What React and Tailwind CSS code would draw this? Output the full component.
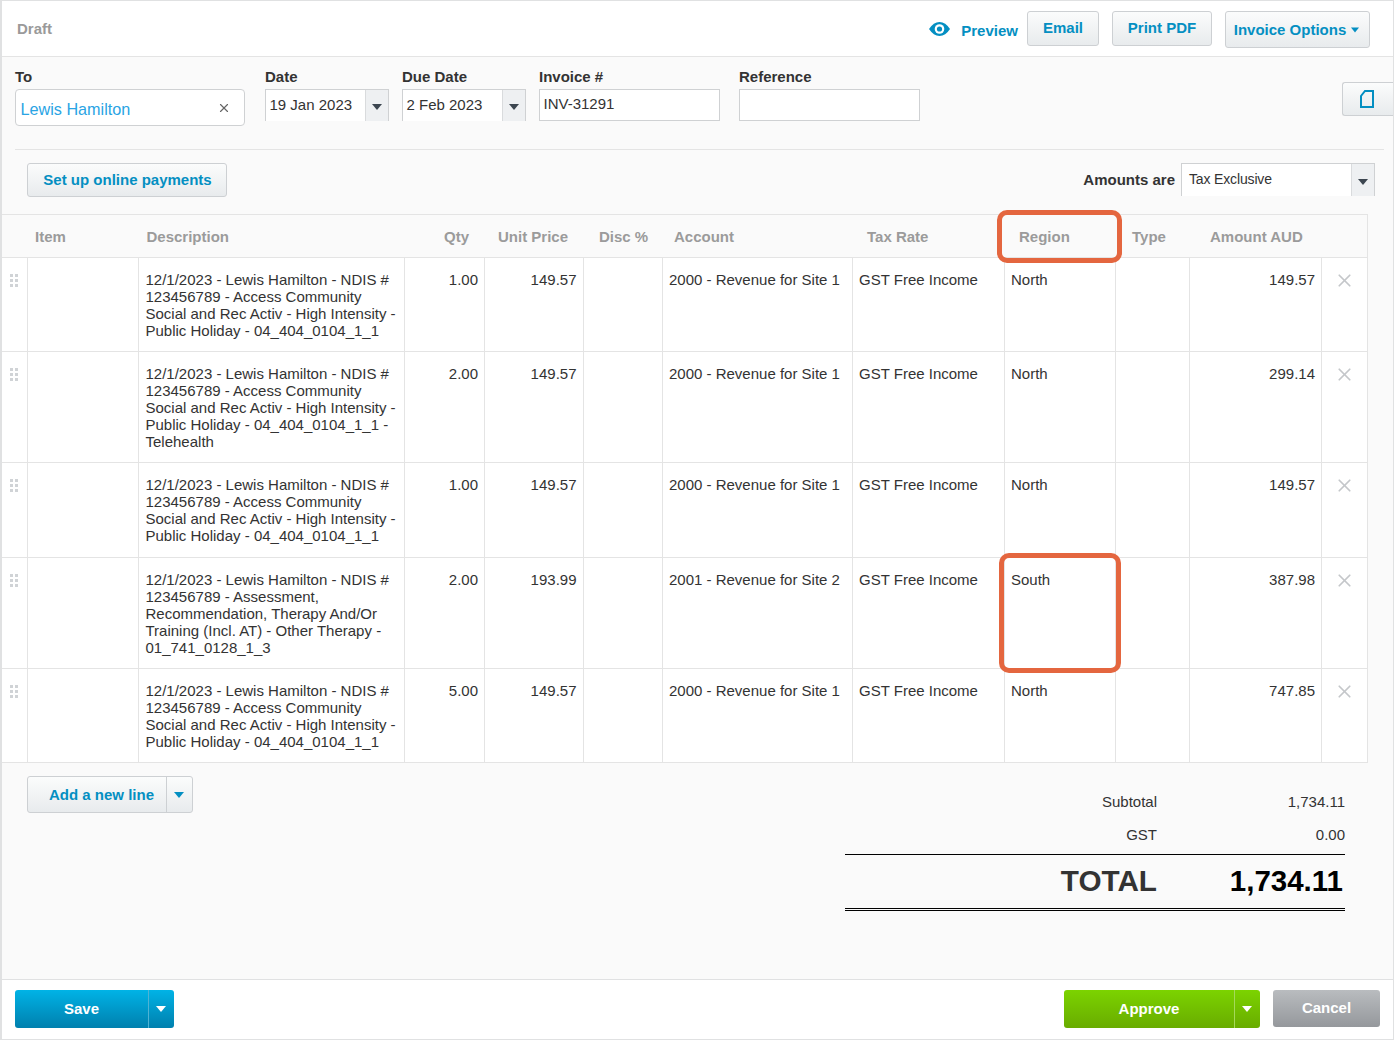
import { X } from "lucide-react";

const FONT = "font-['Liberation_Sans',Arial,sans-serif]";
const LINK = "text-[#048fc2]";
const BTN =
  "border border-[#cdd0d3] rounded-[3px] bg-gradient-to-b from-[#fbfcfc] to-[#e8ebed] font-bold text-[#048fc2] flex items-center justify-center";
const LABEL = "text-[15px] leading-[17px] font-bold text-[#333]";

const GRID =
  "grid grid-cols-[26px_111px_266px_80px_99px_79px_190px_152px_111px_74px_132px_46px]";

const HEADERS = [
  { label: "", cls: "" },
  { label: "Item", cls: "pl-[7px]" },
  { label: "Description", cls: "pl-[7.5px]" },
  { label: "Qty", cls: "text-right pr-[16px]" },
  { label: "Unit Price", cls: "pl-[13px]" },
  { label: "Disc %", cls: "pl-[15px]" },
  { label: "Account", cls: "pl-[11px]" },
  { label: "Tax Rate", cls: "pl-[14px]" },
  { label: "Region", cls: "pl-[14px]" },
  { label: "Type", cls: "pl-[16px]" },
  { label: "Amount AUD", cls: "pl-[20px] col-span-2" },
];

const HOLIDAY = [
  "12/1/2023 - Lewis Hamilton - NDIS #",
  "123456789 - Access Community",
  "Social and Rec Activ - High Intensity -",
];

const ROWS = [
  {
    h: "h-[94px]",
    desc: [...HOLIDAY, "Public Holiday - 04_404_0104_1_1"],
    qty: "1.00",
    price: "149.57",
    account: "2000 - Revenue for Site 1",
    region: "North",
    amount: "149.57",
  },
  {
    h: "h-[111px]",
    desc: [...HOLIDAY, "Public Holiday - 04_404_0104_1_1 -", "Telehealth"],
    qty: "2.00",
    price: "149.57",
    account: "2000 - Revenue for Site 1",
    region: "North",
    amount: "299.14",
  },
  {
    h: "h-[95px]",
    desc: [...HOLIDAY, "Public Holiday - 04_404_0104_1_1"],
    qty: "1.00",
    price: "149.57",
    account: "2000 - Revenue for Site 1",
    region: "North",
    amount: "149.57",
  },
  {
    h: "h-[111px]",
    desc: [
      "12/1/2023 - Lewis Hamilton - NDIS #",
      "123456789 - Assessment,",
      "Recommendation, Therapy And/Or",
      "Training (Incl. AT) - Other Therapy -",
      "01_741_0128_1_3",
    ],
    qty: "2.00",
    price: "193.99",
    account: "2001 - Revenue for Site 2",
    region: "South",
    amount: "387.98",
  },
  {
    h: "h-[94px]",
    desc: [...HOLIDAY, "Public Holiday - 04_404_0104_1_1"],
    qty: "5.00",
    price: "149.57",
    account: "2000 - Revenue for Site 1",
    region: "North",
    amount: "747.85",
  },
];

const Caret = ({ className = "text-[#3c4650]" }) => (
  <svg width="10" height="6" viewBox="0 0 10 6" className={className}>
    <path d="M0 0h10L5 6z" fill="currentColor" />
  </svg>
);

const EyeIcon = () => (
  <svg width="21" height="14" viewBox="0 0 21 14" className={`${LINK} mt-[11px] ml-[1px]`}>
    <path d="M0 7C3 2.500 6.500 0 10.500 0S18 2.500 21 7c-3 4.500-6.500 7-10.500 7S3 11.500 0 7z" fill="currentColor" />
    <circle cx="10.500" cy="7" r="4.800" fill="#fff" />
    <circle cx="10.500" cy="7" r="2.600" fill="currentColor" />
  </svg>
);

const DragHandle = () => (
  <div className="grid grid-cols-2 gap-x-[2px] gap-y-[2px] w-[8px] ml-[8px] mt-[16px]">
    {[0, 1, 2, 3, 4, 5].map((i) => (
      <span key={i} className="w-[3px] h-[3px] bg-[#d0d3d6]" />
    ))}
  </div>
);

const DateField = ({ value }) => (
  <div className="flex w-[124px] h-[32px] border border-[#cfd1d3] border-b-0 bg-white">
    <div className="flex-1 pl-[3.5px] pt-[6px] text-[15px] leading-[17px] text-[#333] whitespace-nowrap">
      {value}
    </div>
    <div className="w-[23px] bg-[#eef0f2] border-l border-[#d9dbdd] flex items-center justify-center pt-[3px]">
      <Caret />
    </div>
  </div>
);

const Row = ({ row }) => {
  const cell = "border-r border-[#e4e4e4] pt-[13px] text-[15px] leading-[17px] text-[#333]";
  return (
    <div className={`${GRID} ${row.h} bg-white border-b border-[#e4e4e4]`}>
      <div className="border-r border-[#e4e4e4]">
        <DragHandle />
      </div>
      <div className="border-r border-[#e4e4e4]" />
      <div className={`${cell} pl-[6.5px] whitespace-nowrap`}>
        {row.desc.map((line) => (
          <div key={line}>{line}</div>
        ))}
      </div>
      <div className={`${cell} text-right pr-[6px]`}>{row.qty}</div>
      <div className={`${cell} text-right pr-[6.5px]`}>{row.price}</div>
      <div className={cell} />
      <div className={`${cell} pl-[6px] whitespace-nowrap`}>{row.account}</div>
      <div className={`${cell} pl-[6px] whitespace-nowrap`}>GST Free Income</div>
      <div className={`${cell} pl-[6px]`}>{row.region}</div>
      <div className={cell} />
      <div className={`${cell} text-right pr-[6px]`}>{row.amount}</div>
      <div className="border-r border-[#e4e4e4] pt-[12px] pl-[12px] text-[#c4c7ca]">
        <X size={21} strokeWidth={2} />
      </div>
    </div>
  );
};

const SplitButton = ({ label, width, from, to, divider }) => (
  <div
    className={`flex h-[38px] rounded-[3px] bg-gradient-to-b ${from} ${to} text-white font-bold text-[15px] ${width}`}
  >
    <div className="flex-1 flex items-center justify-center">{label}</div>
    <div className={`w-[26px] border-l ${divider} flex items-center justify-center pr-[2px]`}>
      <Caret className="text-white" />
    </div>
  </div>
);

export default function App() {
  return (
    <div
      className={`${FONT} relative w-[1394px] h-[1040px] flex flex-col bg-[#fafafa] border border-l-2 border-[#e0e1e2] overflow-hidden`}
    >
      {/* top bar */}
      <div className="h-[56px] shrink-0 bg-white border-b border-[#e4e4e4] flex items-start pl-[15px]">
        <span className="mt-[19px] text-[15px] leading-[17px] font-bold text-[#9a9a9a]">
          Draft
        </span>
        <div className="ml-auto flex items-start pr-[23px] pt-[10px]">
          <EyeIcon />
          <span className={`${LINK} ml-[11px] mt-[11px] text-[15px] leading-[17px] font-bold`}>
            Preview
          </span>
          <div className={`${BTN} w-[72px] h-[35px] ml-[9px] text-[15px]`}>Email</div>
          <div className={`${BTN} w-[100px] h-[35px] ml-[13px] text-[15px]`}>Print PDF</div>
          <div className={`${BTN} w-[145px] h-[37px] ml-[13px] text-[15px] gap-[5px] pr-[2px] pt-[1px]`}>
            Invoice Options
            <Caret className="text-[#048fc2] w-[8px]" />
          </div>
        </div>
      </div>

      {/* invoice fields */}
      <div className="h-[93px] shrink-0 flex items-start ml-[13px] mr-[9px] border-b border-[#e4e4e4]">
        <div className="w-[250px] mt-[11px]">
          <div className={LABEL}>To</div>
          <div className="mt-[4px] flex items-center justify-between w-[230px] h-[37px] bg-white border border-[#cfd1d3] rounded-[4px] pl-[4.500px] pr-[13px]">
            <span className="text-[16.2px] pt-[3px] text-[#2aa4e4]">Lewis Hamilton</span>
            <X size={14} className="text-[#666]" />
          </div>
        </div>
        <div className="w-[137px] mt-[11px]">
          <div className={LABEL}>Date</div>
          <div className="mt-[4px]">
            <DateField value="19 Jan 2023" />
          </div>
        </div>
        <div className="w-[137px] mt-[11px]">
          <div className={LABEL}>Due Date</div>
          <div className="mt-[4px]">
            <DateField value="2 Feb 2023" />
          </div>
        </div>
        <div className="w-[200px] mt-[11px]">
          <div className={LABEL}>Invoice #</div>
          <div className="mt-[4px] w-[181px] h-[32px] border border-[#cfd1d3] bg-white pl-[3.5px] pt-[5px] text-[15px] leading-[17px] text-[#333]">
            INV-31291
          </div>
        </div>
        <div className="w-[181px] mt-[11px]">
          <div className={LABEL}>Reference</div>
          <div className="mt-[4px] w-[181px] h-[32px] border border-[#cfd1d3] bg-white" />
        </div>
        <div className="ml-auto -mr-[11px] mt-[25px] w-[53px] h-[34px] border border-r-0 border-[#cdd0d3] rounded-l-[3px] bg-gradient-to-b from-[#fbfcfc] to-[#e8ebed] flex items-center justify-center pr-[5px]">
          <svg width="14" height="18" viewBox="0 0 14 18" fill="none" stroke="#048fc2" strokeWidth="2">
            <path d="M5 1h8v16H1V6z" />
          </svg>
        </div>
      </div>

      {/* payments + tax mode */}
      <div className="h-[64px] shrink-0 flex items-start pl-[25px] pr-[18px] pt-[13px]">
        <div className={`${BTN} w-[200px] h-[34px] text-[15px] pl-[1px]`}>Set up online payments</div>
        <div className="ml-auto flex items-start">
          <span className={`${LABEL} mt-[8px] mr-[6px]`}>Amounts are</span>
          <div className="flex w-[194px] h-[33px] border border-[#cfd1d3] border-b-0 bg-white">
            <div className="flex-1 pl-[7px] pt-[7px] text-[14px] leading-[17px] text-[#333] tracking-[-0.15px]">
              Tax Exclusive
            </div>
            <div className="w-[23px] bg-[#eef0f2] border-l border-[#d9dbdd] flex items-center justify-center pt-[3px]">
              <Caret />
            </div>
          </div>
        </div>
      </div>

      {/* line items */}
      <div className="w-[1366px] shrink-0">
        <div className={`${GRID} h-[44px] border-y border-r border-[#e4e4e4] items-center`}>
          {HEADERS.map((col) => (
            <div
              key={col.label || "drag"}
              className={`${col.cls} text-[15px] leading-[17px] font-bold text-[#9b9b9b] whitespace-nowrap`}
            >
              {col.label}
            </div>
          ))}
        </div>
        {ROWS.map((row, i) => (
          <Row key={i} row={row} />
        ))}
      </div>

      {/* add line + totals */}
      <div className="flex-1 flex items-start pl-[25px] pr-[48px]">
        <div className={`${BTN} mt-[13px] w-[166px] h-[37px] text-[15px] !justify-start`}>
          <span className="flex-1 text-center pl-[9px] pt-[1px] whitespace-nowrap">Add a new line</span>
          <span className="w-[26px] h-full border-l border-[#cdd0d3] flex items-center justify-center pr-[2px]">
            <Caret className="text-[#048fc2]" />
          </span>
        </div>
        <div className="ml-auto w-[500px] pt-[30px]">
          <div className="flex justify-end text-[15px] leading-[17px] text-[#333]">
            <span>Subtotal</span>
            <span className="w-[188px] text-right">1,734.11</span>
          </div>
          <div className="flex justify-end mt-[16px] text-[15px] leading-[17px] text-[#333]">
            <span>GST</span>
            <span className="w-[188px] text-right">0.00</span>
          </div>
          <div className="mt-[11px] border-t border-black h-[54px] flex justify-end items-center font-bold">
            <span className="text-[29.7px] text-[#333]">TOTAL</span>
            <span className="w-[188px] pr-[2px] text-right text-[29.5px] text-black">1,734.11</span>
          </div>
          <div className="h-[3px] border-y border-black" />
        </div>
      </div>

      {/* footer */}
      <div className="h-[60px] shrink-0 bg-white border-t border-[#e0e1e2] flex items-start px-[13px] pt-[10px]">
        <SplitButton
          label="Save"
          width="w-[159px]"
          from="from-[#00b3e6]"
          to="to-[#0080ae]"
          divider="border-[#4fb3d4]"
        />
        <div className="ml-auto">
          <SplitButton
            label="Approve"
            width="w-[196px]"
            from="from-[#7cd300]"
            to="to-[#69ac00]"
            divider="border-[#a5d95a]"
          />
        </div>
        <div className="ml-[13px] w-[107px] h-[37px] rounded-[3px] bg-gradient-to-b from-[#b9bcbf] to-[#95989c] text-white font-bold text-[15px] flex items-center justify-center">
          Cancel
        </div>
      </div>

      {/* annotation highlights */}
      <div className="absolute left-[995px] top-[209px] w-[125px] h-[53px] border-[5px] border-[#e4663f] rounded-[10px]" />
      <div className="absolute left-[997px] top-[552px] w-[122px] h-[120px] border-[5px] border-[#e4663f] rounded-[10px]" />
    </div>
  );
}
